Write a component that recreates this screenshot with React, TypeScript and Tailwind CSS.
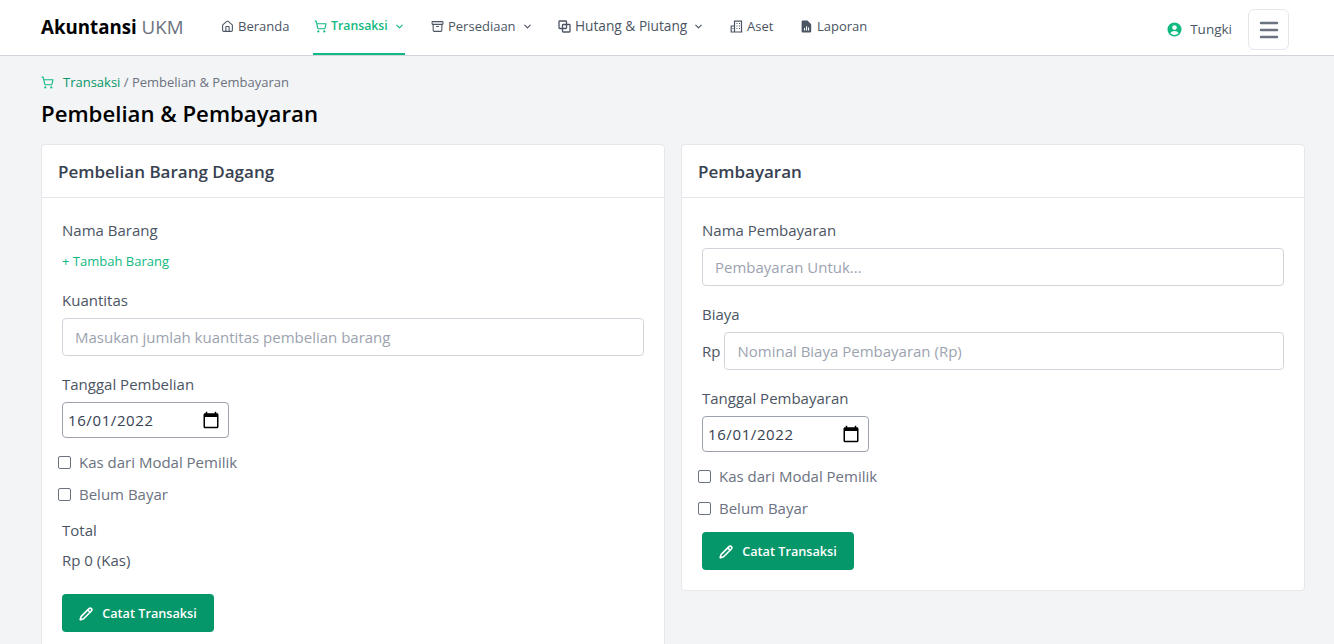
import { ChevronDown, Home, ShoppingCart, Archive, Pencil, Menu } from 'lucide-react'

function Field({ label, children }: { label: string; children: React.ReactNode }) {
  return (
    <div>
      <label className="mb-[6px] block text-[15px] leading-[24px] text-[#4b5563]">{label}</label>
      {children}
    </div>
  )
}

function TextBox({ placeholder }: { placeholder: string }) {
  return (
    <input
      type="text"
      placeholder={placeholder}
      className="h-[38px] w-full rounded border border-[#d1d5db] bg-white px-3 text-[15px] text-[#374151] outline-none placeholder:text-[#9ca3af]"
    />
  )
}

function CalendarIcon() {
  return (
    <svg width="18" height="18" viewBox="0 0 24 24" fill="#000">
      <path d="M20 3h-1V1h-2v2H7V1H5v2H4c-1.1 0-2 .9-2 2v16c0 1.1.9 2 2 2h16c1.1 0 2-.9 2-2V5c0-1.1-.9-2-2-2zm0 18H4V8h16v13z" />
    </svg>
  )
}

function DateBox() {
  return (
    <div className="flex h-[36px] w-[167px] items-center justify-between rounded border border-[#9ca3af] pl-[5px] pr-[8px] text-[15px] tracking-[0.6px] text-[#374151]">
      <span>16/01/2022</span>
      <CalendarIcon />
    </div>
  )
}

function Check({ label }: { label: string }) {
  return (
    <label className="flex h-[32px] items-center text-[15px] text-[#6b7280]">
      <input type="checkbox" className="mr-[8px] ml-[-4px] h-[13px] w-[13px] appearance-none rounded-[2px] border border-[#6b7280] bg-white" />
      {label}
    </label>
  )
}

function SubmitButton() {
  return (
    <button className="flex h-[38px] w-[152px] items-center justify-center gap-[9px] rounded bg-[#059669] pt-[1px] text-[12.7px] font-semibold text-white">
      <Pencil size={14} strokeWidth={2.8} />
      Catat Transaksi
    </button>
  )
}

function Card({ title, children }: { title: string; children: React.ReactNode }) {
  return (
    <div className="w-[624px] rounded border border-[#e5e7eb] bg-white">
      <div className="flex h-[53px] items-center border-b border-[#e5e7eb] px-4 pt-[1px] text-[17px] font-semibold text-[#374151]">{title}</div>
      <div className="p-5">{children}</div>
    </div>
  )
}

function NavItem({ icon, label, active, caret, width, size = 'text-[13px]' }: { icon: React.ReactNode; label: string; active?: boolean; caret?: boolean; width: string; size?: string }) {
  return (
    <div className={width}>
      <div className={`inline-flex h-[55px] items-center gap-[4px] border-b-2 ${active ? 'border-[#10b981] pl-[1px] text-[12.3px] font-semibold text-[#10b981]' : `border-transparent ${size} text-[#4b5563]`}`}>
        {icon}
        <span>{label}</span>
        {caret && <ChevronDown size={11} strokeWidth={2.5} className="ml-[2px]" />}
      </div>
    </div>
  )
}

function CopyIcon() {
  return (
    <svg width="13" height="13" viewBox="0 0 13 13" fill="none" stroke="currentColor" strokeWidth="1.3">
      <rect x="1" y="1" width="7.5" height="7.5" rx="0.8" />
      <rect x="4.5" y="4.5" width="7.5" height="7.5" rx="0.8" />
    </svg>
  )
}

function BuildingIcon() {
  return (
    <svg width="13" height="13" viewBox="0 0 13 13" fill="none" stroke="currentColor" strokeWidth="1.2">
      <path d="M4.5 12V1.2h7V12zM1.2 12V6h3.3M0.6 12h11.8" />
      <path d="M6.5 3.5h1M9 3.5h1M6.5 6h1M9 6h1M6.5 8.5h1M9 8.5h1" />
      <path d="M2.5 8.5h1" />
    </svg>
  )
}

function ReportIcon() {
  return (
    <svg width="13" height="13" viewBox="0 0 13 13" fill="currentColor">
      <path d="M2.8 0.5h4.7l3.7 3.7v7.1a1.2 1.2 0 0 1-1.2 1.2H2.8a1.2 1.2 0 0 1-1.2-1.2V1.7a1.2 1.2 0 0 1 1.2-1.2z" />
      <path d="M4 10.5V8h1.1v2.5zM6 10.5V6.2h1.1v4.3zM8 10.5V7.4h1.1v3.1z" fill="#fff" />
    </svg>
  )
}

function UserIcon() {
  return (
    <svg width="15" height="15" viewBox="0 0 15 15">
      <circle cx="7.5" cy="7.5" r="7" fill="#10b981" />
      <circle cx="7.5" cy="5.6" r="2.3" fill="#fff" />
      <path d="M3.4 11.2c.8-1.5 2.3-2.2 4.1-2.2s3.300.7 4.100 2.200a5.600 5.600 0 0 1-8.200 0z" fill="#fff" />
    </svg>
  )
}

export default function App() {
  return (
    <div className="h-screen overflow-hidden bg-[#f3f4f6] font-['Open_Sans','Noto_Sans',sans-serif]">
      <nav className="flex h-[56px] items-center justify-between border-b border-[#d1d5db] bg-white pl-[41px] pr-[45px]">
        <div className="flex items-center">
          <div className="w-[180px] text-[18.7px] text-[#6b7280]">
            <span className="font-bold text-black">Akuntansi</span> UKM
          </div>
          <div className="flex">
            <NavItem width="w-[92px]" icon={<Home size={13} />} label="Beranda" />
            <NavItem width="w-[118px]" icon={<ShoppingCart size={13} />} label="Transaksi" active caret />
            <NavItem width="w-[127px]" icon={<Archive size={13} />} label="Persediaan" caret />
            <NavItem width="w-[172px]" size="text-[13.7px]" icon={<CopyIcon />} label="Hutang & Piutang" caret />
            <NavItem width="w-[70px]" icon={<BuildingIcon />} label="Aset" />
            <NavItem width="w-[80px]" icon={<ReportIcon />} label="Laporan" />
          </div>
        </div>
        <div className="flex items-center pt-[4px]">
          <UserIcon />
          <span className="ml-2 mr-4 text-[13.5px] text-[#4b5563]">Tungki</span>
          <button className="flex h-[41px] w-[41px] items-center justify-center rounded-md border border-[#e5e7eb] text-[#6b7280]">
            <Menu size={24} strokeWidth={2.5} />
          </button>
        </div>
      </nav>

      <div className="pl-[41px] pr-[29px]">
        <div className="flex items-center pt-[16px] text-[13px] leading-[20px] text-[#6b7280]">
          <ShoppingCart size={13} className="mr-[9px] text-[#10b981]" />
          <span className="text-[#059669]">Transaksi</span>
          <span>&nbsp;/ Pembelian &amp; Pembayaran</span>
        </div>
        <h1 className="mt-[6px] mb-[14px] text-[22.2px] leading-[32px] font-semibold text-black">Pembelian &amp; Pembayaran</h1>

        <div className="flex items-start gap-4">
          <Card title="Pembelian Barang Dagang">
            <div className="flex flex-col">
              <label className="text-[15px] leading-[24px] text-[#4b5563]">Nama Barang</label>
              <div className="mt-[9px] mb-[17px] text-[13px] leading-[20px] text-[#10b981]">+ Tambah Barang</div>
              <Field label="Kuantitas">
                <TextBox placeholder="Masukan jumlah kuantitas pembelian barang" />
              </Field>
              <div className="mt-[16px]">
                <Field label="Tanggal Pembelian">
                  <DateBox />
                </Field>
              </div>
              <div className="mt-[8px]">
                <Check label="Kas dari Modal Pemilik" />
                <Check label="Belum Bayar" />
              </div>
              <div className="mt-[8px] text-[15px] leading-[24px] text-[#4b5563]">Total</div>
              <div className="mt-[6px] mb-[22px] text-[15px] leading-[24px] text-[#4b5563]">Rp 0 (Kas)</div>
              <SubmitButton />
            </div>
          </Card>
          <Card title="Pembayaran">
            <div className="flex flex-col">
              <Field label="Nama Pembayaran">
                <TextBox placeholder="Pembayaran Untuk..." />
              </Field>
              <div className="mt-[16px]">
                <Field label="Biaya">
                  <div className="flex items-center gap-[4px]">
                    <span className="text-[15px] text-[#4b5563]">Rp</span>
                    <TextBox placeholder="Nominal Biaya Pembayaran (Rp)" />
                  </div>
                </Field>
              </div>
              <div className="mt-[16px]">
                <Field label="Tanggal Pembayaran">
                  <DateBox />
                </Field>
              </div>
              <div className="mt-[8px]">
                <Check label="Kas dari Modal Pemilik" />
                <Check label="Belum Bayar" />
              </div>
              <div className="mt-[8px]">
                <SubmitButton />
              </div>
            </div>
          </Card>
        </div>
      </div>
    </div>
  )
}
